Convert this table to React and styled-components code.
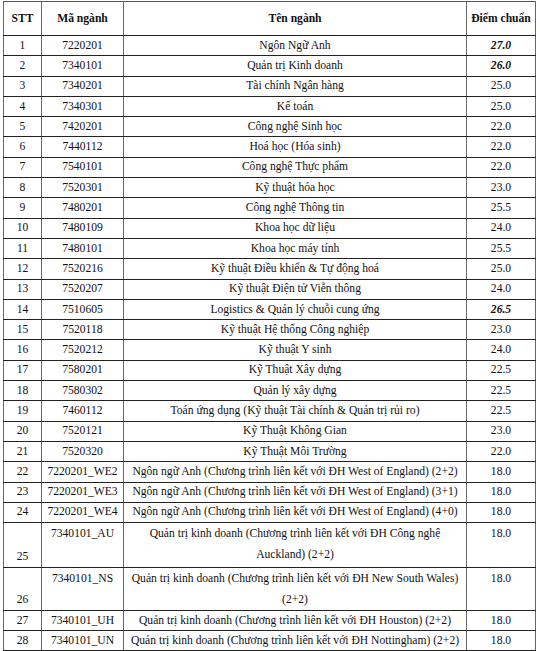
import React from "react";
import styled, { createGlobalStyle, css } from "styled-components";

const Global = createGlobalStyle`
  html, body { margin: 0; padding: 0; background: #ffffff; }
  body { font-family: "Liberation Serif", "Times New Roman", serif; color: #111; }
`;

const Page = styled.div`
  padding: 1px 0 0 3px;
`;

const Table = styled.table`
  border-collapse: collapse;
  table-layout: fixed;
  width: 532px;
  font-size: 11.6px;
  border: 1px solid #555;
`;

const Col = styled.col`
  width: ${(p) => p.$w}px;
`;

const HeadRow = styled.tr`
  height: 34px;
`;

const HeadCell = styled.th`
  font-weight: bold;
  text-align: center;
  vertical-align: middle;
  padding: 0 2px;
  border-left: 1px solid #666;
  border-right: 1px solid #666;
  border-bottom: 1px solid #222;
  border-top: 1px solid #555;
`;

const Row = styled.tr`
  height: ${(p) => p.$h}px;
`;

const Cell = styled.td`
  text-align: center;
  padding: ${(p) => (p.$multi ? "1px 2px 0" : "0 2px")};
  line-height: ${(p) => (p.$multi ? "20.5px" : "16px")};
  vertical-align: ${(p) => p.$valign || "middle"};
  border-left: 1px solid #666;
  border-right: 1px solid #666;
  border-top: 1px solid #222;
  border-bottom: 1px solid #222;
  white-space: nowrap;
  overflow: hidden;
  ${(p) =>
    p.$strong &&
    css`
      font-weight: bold;
      font-style: italic;
    `}
`;

const rows = [
  ["1", "7220201", "Ngôn Ngữ Anh", "27.0", true],
  ["2", "7340101", "Quản trị Kinh doanh", "26.0", true],
  ["3", "7340201", "Tài chính Ngân hàng", "25.0"],
  ["4", "7340301", "Kế toán", "25.0"],
  ["5", "7420201", "Công nghệ Sinh học", "22.0"],
  ["6", "7440112", "Hoá học (Hóa sinh)", "22.0"],
  ["7", "7540101", "Công nghệ Thực phẩm", "22.0"],
  ["8", "7520301", "Kỹ thuật hóa học", "23.0"],
  ["9", "7480201", "Công nghệ Thông tin", "25.5"],
  ["10", "7480109", "Khoa học dữ liệu", "24.0"],
  ["11", "7480101", "Khoa học máy tính", "25.5"],
  ["12", "7520216", "Kỹ thuật Điều khiển & Tự động hoá", "25.0"],
  ["13", "7520207", "Kỹ thuật Điện tử Viễn thông", "24.0"],
  ["14", "7510605", "Logistics & Quản lý chuỗi cung ứng", "26.5", true],
  ["15", "7520118", "Kỹ thuật Hệ thống Công nghiệp", "23.0"],
  ["16", "7520212", "Kỹ thuật Y sinh", "24.0"],
  ["17", "7580201", "Kỹ Thuật Xây dựng", "22.5"],
  ["18", "7580302", "Quản lý xây dựng", "22.5"],
  ["19", "7460112", "Toán ứng dụng (Kỹ thuật Tài chính & Quản trị rủi ro)", "22.5"],
  ["20", "7520121", "Kỹ Thuật Không Gian", "23.0"],
  ["21", "7520320", "Kỹ Thuật Môi Trường", "22.0"],
  ["22", "7220201_WE2", "Ngôn ngữ Anh (Chương trình liên kết với ĐH West of England) (2+2)", "18.0"],
  ["23", "7220201_WE3", "Ngôn ngữ Anh (Chương trình liên kết với ĐH West of England) (3+1)", "18.0"],
  ["24", "7220201_WE4", "Ngôn ngữ Anh (Chương trình liên kết với ĐH West of England) (4+0)", "18.0"],
];

const multiRows = [
  {
    stt: "25",
    code: "7340101_AU",
    lines: ["Quản trị kinh doanh (Chương trình liên kết với ĐH Công nghệ", "Auckland) (2+2)"],
    score: "18.0",
    h: 45,
  },
  {
    stt: "26",
    code: "7340101_NS",
    lines: ["Quản trị kinh doanh (Chương trình liên kết với ĐH New South Wales)", "(2+2)"],
    score: "18.0",
    h: 42,
  },
];

const tailRows = [
  ["27", "7340101_UH", "Quản trị kinh doanh (Chương trình liên kết với ĐH Houston) (2+2)", "18.0"],
  ["28", "7340101_UN", "Quản trị kinh doanh (Chương trình liên kết với ĐH Nottingham) (2+2)", "18.0"],
];

function SimpleRow({ r, h }) {
  const [stt, code, name, score, strong] = r;
  return (
    <Row $h={h}>
      <Cell>{stt}</Cell>
      <Cell>{code}</Cell>
      <Cell>{name}</Cell>
      <Cell $strong={strong}>{score}</Cell>
    </Row>
  );
}

export default function App() {
  return (
    <Page>
      <Global />
      <Table>
        <colgroup>
          <Col $w={38} />
          <Col $w={82} />
          <Col $w={343} />
          <Col $w={69} />
        </colgroup>
        <thead>
          <HeadRow>
            <HeadCell>STT</HeadCell>
            <HeadCell>Mã ngành</HeadCell>
            <HeadCell>Tên ngành</HeadCell>
            <HeadCell>Điểm chuẩn</HeadCell>
          </HeadRow>
        </thead>
        <tbody>
          {rows.map((r) => (
            <SimpleRow key={r[0]} r={r} h={20.3} />
          ))}
          {multiRows.map((m) => (
            <Row key={m.stt} $h={m.h}>
              <Cell $multi $valign="bottom">{m.stt}</Cell>
              <Cell $multi $valign="top">{m.code}</Cell>
              <Cell $multi $valign="top">
                {m.lines[0]}
                <br />
                {m.lines[1]}
              </Cell>
              <Cell $multi $valign="top">{m.score}</Cell>
            </Row>
          ))}
          {tailRows.map((r) => (
            <SimpleRow key={r[0]} r={r} h={20} />
          ))}
        </tbody>
      </Table>
    </Page>
  );
}
